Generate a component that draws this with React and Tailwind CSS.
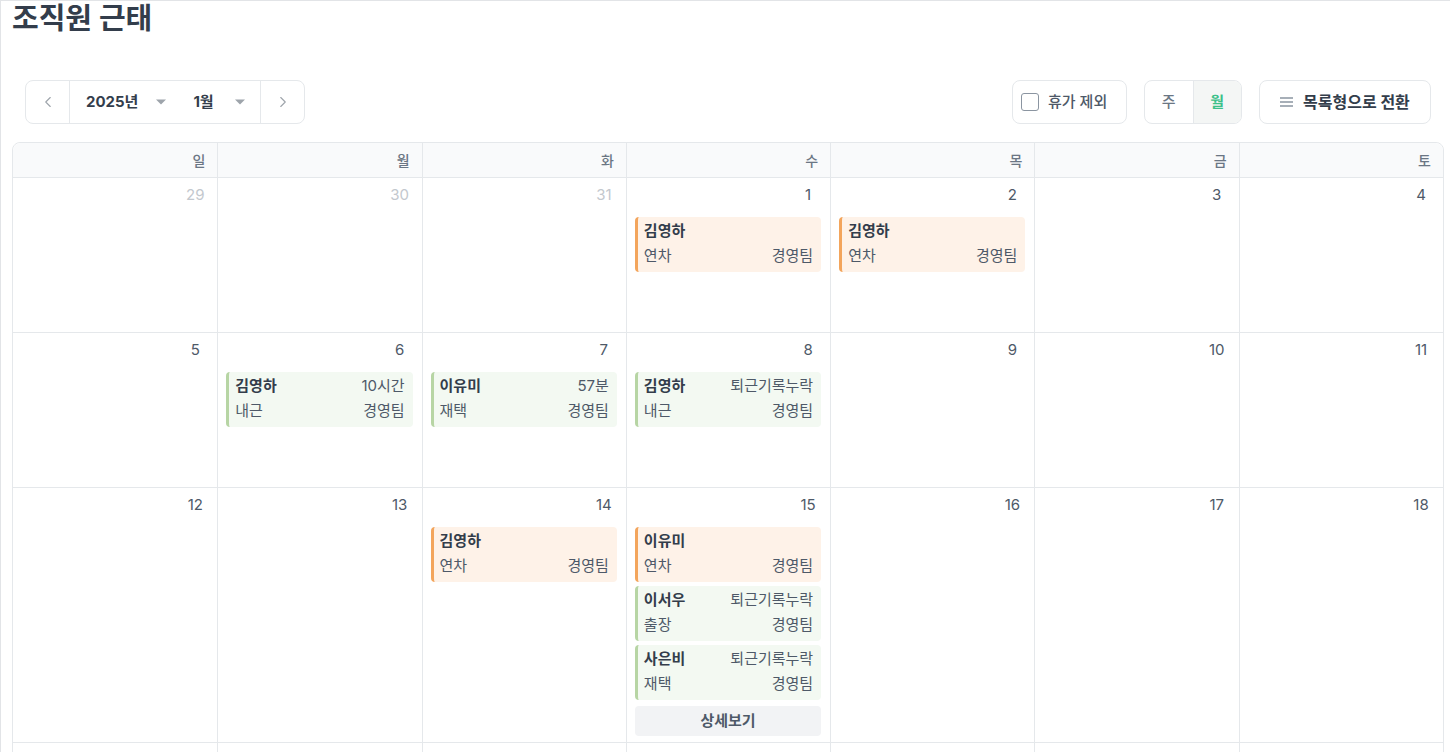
import React from 'react';
import { ChevronLeft, ChevronRight } from 'lucide-react';

const days = ['일', '월', '화', '수', '목', '금', '토'];

const weeks = [
  [
    { d: 29, muted: true },
    { d: 30, muted: true },
    { d: 31, muted: true },
    { d: 1, events: [{ type: 'leave', name: '김영하', kind: '연차', team: '경영팀' }] },
    { d: 2, events: [{ type: 'leave', name: '김영하', kind: '연차', team: '경영팀' }] },
    { d: 3 },
    { d: 4 },
  ],
  [
    { d: 5 },
    { d: 6, events: [{ type: 'work', name: '김영하', note: '10시간', kind: '내근', team: '경영팀' }] },
    { d: 7, events: [{ type: 'work', name: '이유미', note: '57분', kind: '재택', team: '경영팀' }] },
    { d: 8, events: [{ type: 'work', name: '김영하', note: '퇴근기록누락', kind: '내근', team: '경영팀' }] },
    { d: 9 },
    { d: 10 },
    { d: 11 },
  ],
  [
    { d: 12 },
    { d: 13 },
    { d: 14, events: [{ type: 'leave', name: '김영하', kind: '연차', team: '경영팀' }] },
    {
      d: 15,
      more: true,
      events: [
        { type: 'leave', name: '이유미', kind: '연차', team: '경영팀' },
        { type: 'work', name: '이서우', note: '퇴근기록누락', kind: '출장', team: '경영팀' },
        { type: 'work', name: '사은비', note: '퇴근기록누락', kind: '재택', team: '경영팀' },
      ],
    },
    { d: 16 },
    { d: 17 },
    { d: 18 },
  ],
  [{ d: 19 }, { d: 20 }, { d: 21 }, { d: 22 }, { d: 23 }, { d: 24 }, { d: 25 }],
  [{ d: 26 }, { d: 27 }, { d: 28 }, { d: 29 }, { d: 30 }, { d: 31 }, { d: 1, muted: true }],
];

const Caret = () => (
  <svg width="12" height="8" viewBox="0 0 12 8" className="text-[#9ea4ab]">
    <path d="M1 1.5h10L6 6.5z" fill="currentColor" />
  </svg>
);

const EventCard = ({ ev }) => {
  const leave = ev.type === 'leave';
  return (
    <div
      className={`flex flex-col gap-[5px] pt-[4px] pb-[6px] pl-[6px] pr-2 rounded-[4px] border-l-[3px] ${
        leave ? 'bg-[#fef2e8] border-[#f3a55c]' : 'bg-[#f3f9f2] border-[#b7d5a4]'
      }`}
    >
      <div className="flex items-center justify-between leading-5 text-[15px]">
        <span className="font-bold text-[#333d4b]">{ev.name}</span>
        {ev.note && <span className="text-[#4e5968]">{ev.note}</span>}
      </div>
      <div className="flex items-center justify-between leading-5 text-[15px] text-[#4e5968]">
        <span>{ev.kind}</span>
        <span>{ev.team}</span>
      </div>
    </div>
  );
};

const App = () => {
  return (
    <div
      className="min-h-screen bg-white border-l border-t border-[#e2e4e7] pl-[11px] pr-[6px]"
      style={{ fontFamily: 'Inter, "Noto Sans CJK KR", sans-serif' }}
    >
      {/* 제목 */}
      <h1 className="text-[29px] leading-[36px] font-bold text-[#333d4b]">조직원 근태</h1>

      {/* 툴바 */}
      <div className="flex items-center justify-between mt-[43px] px-[13px]">
        <div className="flex h-[44px] border border-[#e5e8eb] rounded-lg bg-white">
          <button className="w-[43px] flex items-center justify-center text-[#9ea4ab]">
            <ChevronLeft className="h-[18px] w-[18px]" strokeWidth={1.5} />
          </button>
          <div className="w-[192px] border-l border-r border-[#e5e8eb] flex items-center pl-4">
            <span className="text-[15px] font-bold text-[#333d4b]">2025년</span>
            <span className="ml-[17px]"><Caret /></span>
            <span className="ml-[26px] text-[15px] font-bold text-[#333d4b]">1월</span>
            <span className="ml-[20px]"><Caret /></span>
          </div>
          <button className="w-[43px] flex items-center justify-center text-[#9ea4ab]">
            <ChevronRight className="h-[18px] w-[18px]" strokeWidth={1.5} />
          </button>
        </div>

        <div className="flex items-center">
          <label className="h-[44px] w-[115px] flex items-center gap-[9px] pl-[8px] border border-[#e5e8eb] rounded-lg">
            <span className="w-[18px] h-[18px] border-[1.5px] border-[#8b95a1] rounded-[3px] bg-white" />
            <span className="text-[15px] font-medium text-[#4e5968]">휴가 제외</span>
          </label>
          <div className="ml-[17px] h-[44px] w-[98px] flex border border-[#e5e8eb] rounded-lg overflow-hidden">
            <button className="flex-1 text-[15px] font-medium text-[#6b7684]">주</button>
            <button className="flex-1 text-[15px] font-bold text-[#3cc189] bg-[#f4f6f5] border-l border-[#e5e8eb]">월</button>
          </div>
          <button className="ml-[17px] h-[44px] w-[172px] flex items-center gap-[10px] pl-[20px] border border-[#e5e8eb] rounded-lg">
            <svg width="13" height="10" viewBox="0 0 13 10" className="text-[#8b95a1]">
              <path d="M0 1h13M0 5h13M0 9h13" stroke="currentColor" strokeWidth="1.3" />
            </svg>
            <span className="text-[16px] font-bold text-[#333d4b]">목록형으로 전환</span>
          </button>
        </div>
      </div>

      {/* 달력 */}
      <div className="mt-[18px] border border-[#e5e8eb] rounded-t-lg">
        <div className="grid grid-cols-7 h-[35px] bg-[#f9fafb] rounded-t-lg border-b border-[#e5e8eb]">
          {days.map((d, i) => (
            <div
              key={d}
              className={`flex items-center justify-end pr-3 text-[14px] font-medium text-[#6b7684] ${
                i > 0 ? 'border-l border-[#e5e8eb]' : ''
              }`}
            >
              {d}
            </div>
          ))}
        </div>
        {weeks.map((week, wi) => (
          <div key={wi} className={`grid grid-cols-7 ${wi > 0 ? 'border-t border-[#e5e8eb]' : ''}`}>
            {week.map((cell, ci) => (
              <div
                key={ci}
                className={`min-h-[154px] pt-[7px] pb-[6px] pl-2 pr-[9px] ${ci > 0 ? 'border-l border-[#e5e8eb]' : ''}`}
              >
                <div className="flex justify-end">
                  <span
                    className={`w-[26px] text-center text-[15px] leading-5 ${
                      cell.muted ? 'text-[#c3c8ce]' : 'text-[#4e5968]'
                    }`}
                  >
                    {cell.d}
                  </span>
                </div>
                {cell.events && (
                  <div className="mt-[12px] flex flex-col gap-1">
                    {cell.events.map((ev, ei) => (
                      <EventCard key={ei} ev={ev} />
                    ))}
                    {cell.more && (
                      <button className="mt-[2px] h-[30px] rounded-[4px] bg-[#f2f3f5] text-[15px] font-bold text-[#4e5968]">
                        상세보기
                      </button>
                    )}
                  </div>
                )}
              </div>
            ))}
          </div>
        ))}
      </div>
    </div>
  );
};

export default App;
